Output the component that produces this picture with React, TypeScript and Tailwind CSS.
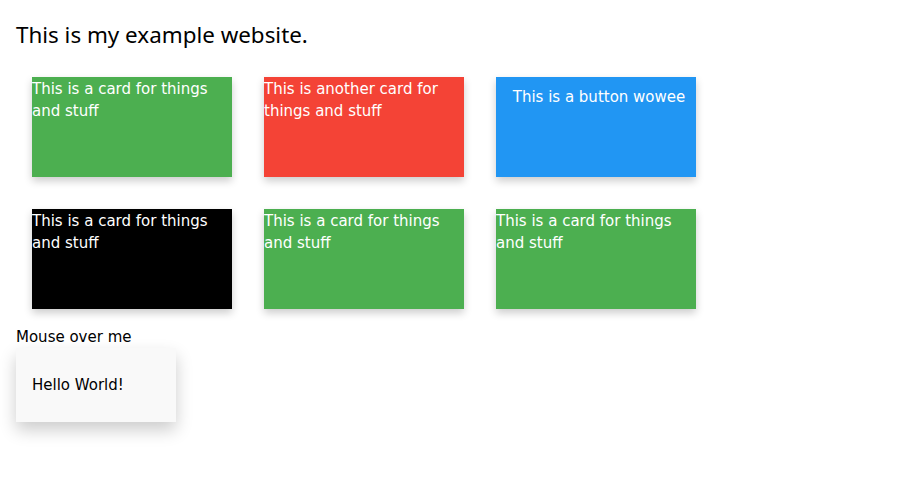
export default function App() {
  const cards = [
    { text: "This is a card for things and stuff", bg: "bg-[#4CAF50]" },
    { text: "This is another card for things and stuff", bg: "bg-[#F44336]" },
  ]
  const row2 = ["bg-black", "bg-[#4CAF50]", "bg-[#4CAF50]"]

  return (
    <div className="min-h-screen bg-white px-4 text-black [font-family:'DejaVu_Sans',sans-serif]">
      <h1 className="pt-[22px] text-[22.4px] leading-[26px] [font-family:'Noto_Sans',sans-serif]">
        This is my example website.
      </h1>
      <div className="mt-[13px] grid w-fit grid-cols-[repeat(3,200px)] gap-8 p-4">
        {cards.map((c) => (
          <div
            key={c.text}
            className={`h-[100px] ${c.bg} pt-px text-[15px] leading-[22px] text-white shadow-[0_4px_8px_rgba(0,0,0,0.2)]`}
          >
            {c.text}
          </div>
        ))}
        <button className="flex h-[100px] justify-center bg-[#2196F3] pt-[9px] pl-1.5 text-[15px] leading-[22px] text-white shadow-[0_4px_8px_rgba(0,0,0,0.2)]">
          This is a button wowee
        </button>
        {row2.map((bg, i) => (
          <div
            key={i}
            className={`h-[100px] ${bg} pt-px text-[15px] leading-[22px] text-white shadow-[0_4px_8px_rgba(0,0,0,0.2)]`}
          >
            This is a card for things and stuff
          </div>
        ))}
      </div>
      <div className="pt-px text-[15px] leading-[22px]">Mouse over me</div>
      <div className="flex h-[74px] w-[160px] items-center bg-[#f9f9f9] px-4 pt-px text-[15px] shadow-[0_8px_16px_rgba(0,0,0,0.2)]">
        Hello World!
      </div>
    </div>
  )
}
